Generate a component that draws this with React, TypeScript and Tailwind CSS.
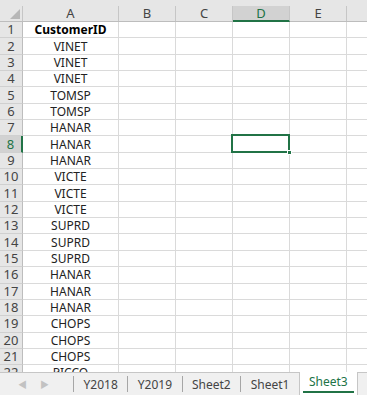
import clsx from "clsx";

const COLS = ["A", "B", "C", "D", "E"];

const DATA = [
  "CustomerID",
  "VINET",
  "VINET",
  "VINET",
  "TOMSP",
  "TOMSP",
  "HANAR",
  "HANAR",
  "HANAR",
  "VICTE",
  "VICTE",
  "VICTE",
  "SUPRD",
  "SUPRD",
  "SUPRD",
  "HANAR",
  "HANAR",
  "HANAR",
  "CHOPS",
  "CHOPS",
  "CHOPS",
  "PICCO",
];

const GRID = "grid grid-cols-[23px_96px_57px_57px_57px_57px_1fr]";

const SheetTab = ({ name, active, first }: { name: string; active?: boolean; first?: boolean }) => {
  if (active) {
    return (
      <div className="relative -mt-px h-[23px] px-[9px] bg-white border-x border-[#c6c6c6] text-[#217346] flex items-start pt-[4px]">
        {name}
        <div className="absolute left-[3px] right-[3px] bottom-[2px] h-[2px] bg-[#217346]" />
      </div>
    );
  }
  return (
    <div className="flex items-center h-full">
      {!first && <div className="w-px h-[16px] bg-[#a6a6a6]" />}
      <div className="px-[9.5px] pt-[1px]">{name}</div>
    </div>
  );
};

export default function App() {
  return (
    <div
      className="w-[367px] h-[395px] flex flex-col overflow-hidden bg-white text-[#222] select-none"
      style={{ fontFamily: '"Noto Sans", "Noto Sans CJK SC", sans-serif' }}
    >
      {/* Column headers */}
      <div className={clsx(GRID, "h-[22px] shrink-0 bg-[#e6e6e6] border-b border-[#bdbdbd]")}>
        <div className="relative border-r border-[#c6c6c6] mt-[6px]">
          <div className="absolute left-[10px] top-[3px] w-0 h-0 border-l-[10px] border-l-transparent border-b-[10px] border-b-[#b7b7b7]" />
        </div>
        {COLS.map((c) => (
          <div
            key={c}
            className={clsx(
              "mt-[6px] border-r border-[#c6c6c6] flex items-center justify-center text-[13px] leading-none",
              c === "D" ? "bg-[#d2d2d2] text-[#217346] border-b-2 border-b-[#217346] -mb-px" : "text-[#444]"
            )}
          >
            {c}
          </div>
        ))}
        <div className="mt-[6px]" />
      </div>

      {/* Rows */}
      <div className="flex-1 overflow-hidden">
        {DATA.map((v, i) => {
          const row = i + 1;
          const sel = row === 8;
          return (
            <div key={row} className={clsx(GRID, "h-[16.35px] leading-[15px]")}>
              <div
                className={clsx(
                  "flex items-center justify-center text-[13px] border-b border-[#d0d0d0]",
                  sel
                    ? "bg-[#d2d2d2] text-[#217346] border-r-2 border-r-[#217346]"
                    : "bg-[#e6e6e6] text-[#444] border-r border-r-[#bdbdbd]"
                )}
              >
                {row}
              </div>
              <div
                className={clsx(
                  "flex items-center justify-center text-[12px] border-r border-b border-[#dadada] whitespace-nowrap",
                  row === 1 && "font-bold text-black"
                )}
              >
                {v}
              </div>
              {COLS.slice(1).map((c) => (
                <div key={c} className="relative border-r border-b border-[#dadada]">
                  {sel && c === "D" && (
                    <div className="absolute -left-[2px] -top-[2px] -right-px -bottom-px border-2 border-[#217346] z-10">
                      <div className="absolute -right-[4px] -bottom-[4px] w-[5px] h-[5px] bg-[#217346] border border-white" />
                    </div>
                  )}
                </div>
              ))}
              <div className="border-b border-[#dadada]" />
            </div>
          );
        })}
      </div>

      {/* Sheet tabs */}
      <div className="h-[23px] shrink-0 bg-[#f0f0f0] border-t border-[#c6c6c6] flex items-stretch text-[12px] leading-none text-[#444]">
        <div className="w-[73px] flex items-center pl-[18px] gap-[13px] text-[9px] text-[#c2c2c2]">
          <span>◀</span>
          <span>▶</span>
        </div>
        <div className="flex items-center h-full">
          <div className="w-px h-[16px] bg-[#a6a6a6]" />
        </div>
        <SheetTab name="Y2018" first />
        <SheetTab name="Y2019" />
        <SheetTab name="Sheet2" />
        <SheetTab name="Sheet1" />
        <SheetTab name="Sheet3" active />
      </div>
    </div>
  );
}
